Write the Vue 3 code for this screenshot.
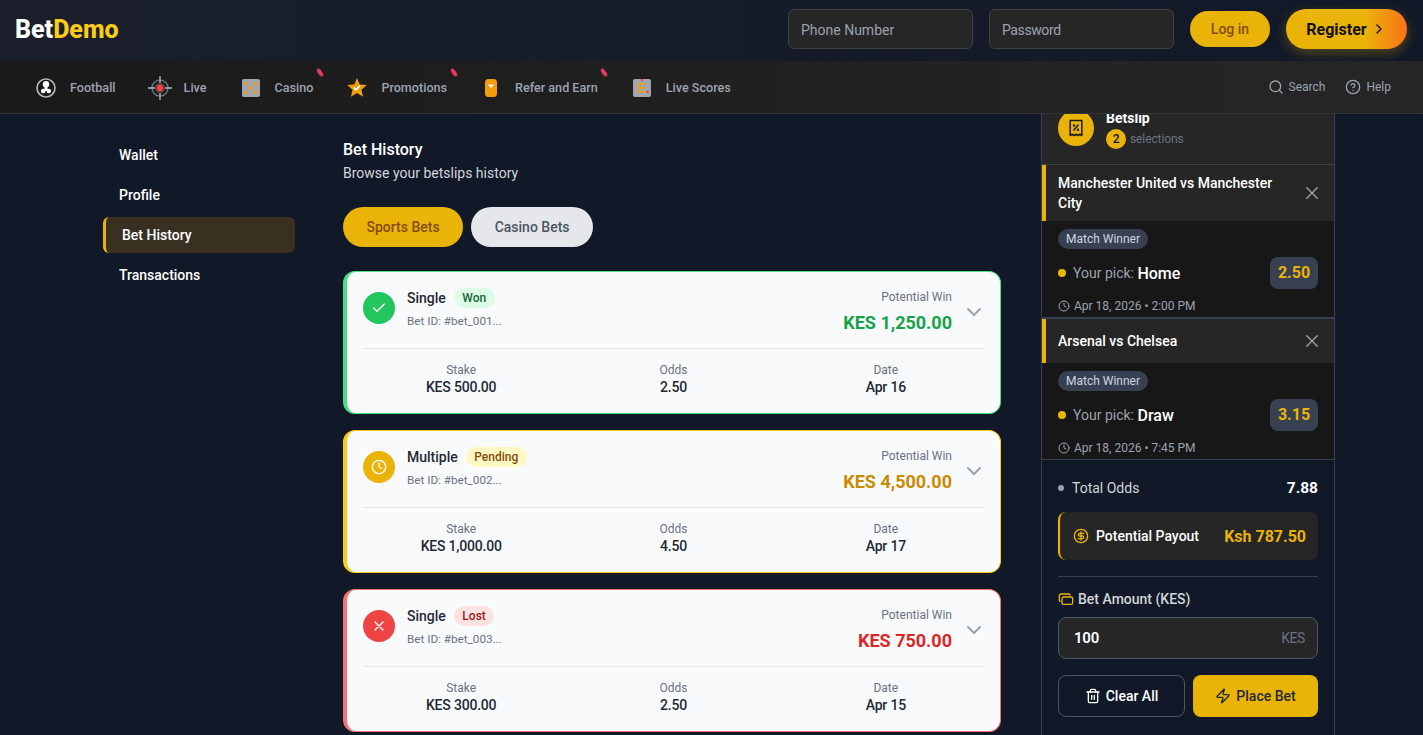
<script setup>
const navItems = [
  { label: 'Football', icon: 'football' },
  { label: 'Live', icon: 'live' },
  { label: 'Casino', icon: 'casino', flag: true },
  { label: 'Promotions', icon: 'promo', flag: true },
  { label: 'Refer and Earn', icon: 'refer', flag: true },
  { label: 'Live Scores', icon: 'scores' }
]
const sideItems = ['Wallet', 'Profile', 'Bet History', 'Transactions']
const bets = [
  { type: 'Single', status: 'Won', cls: 'won', id: '#bet_001...', win: 'KES 1,250.00', stake: 'KES 500.00', odds: '2.50', date: 'Apr 16' },
  { type: 'Multiple', status: 'Pending', cls: 'pending', id: '#bet_002...', win: 'KES 4,500.00', stake: 'KES 1,000.00', odds: '4.50', date: 'Apr 17' },
  { type: 'Single', status: 'Lost', cls: 'lost', id: '#bet_003...', win: 'KES 750.00', stake: 'KES 300.00', odds: '2.50', date: 'Apr 15' }
]
const slips = [
  { title: 'Manchester United vs Manchester City', pick: 'Home', odds: '2.50', date: 'Apr 18, 2026 • 2:00 PM' },
  { title: 'Arsenal vs Chelsea', pick: 'Draw', odds: '3.15', date: 'Apr 18, 2026 • 7:45 PM' }
]
</script>

<template>
  <div class="page">
    <header class="top">
      <div class="logo">Bet<span>Demo</span></div>
      <div class="auth">
        <div class="field">Phone Number</div>
        <div class="field">Password</div>
        <button class="login">Log in</button>
        <button class="register">Register
          <svg width="16" height="16" viewBox="0 0 24 24" fill="none" stroke="currentColor" stroke-width="2" stroke-linecap="round" stroke-linejoin="round"><path d="m9 18 6-6-6-6"/></svg>
        </button>
      </div>
    </header>

    <nav class="nav">
      <div class="nav-list">
        <div v-for="item in navItems" :key="item.label" class="nav-item">
          <span class="nav-icon">
            <svg v-if="item.icon === 'football'" width="20" height="20" viewBox="0 0 20 20">
              <circle cx="10" cy="10" r="9" fill="none" stroke="#b4b8c0" stroke-width="1.6"/>
              <circle cx="10" cy="6.200" r="3.200" fill="#fff"/>
              <circle cx="7.200" cy="13" r="2.300" fill="#fff"/>
              <circle cx="12.800" cy="13" r="2.300" fill="#fff"/>
              <path d="M8.500 8.500h3v4.500h-3z" fill="#fff"/>
            </svg>
            <svg v-else-if="item.icon === 'live'" width="24" height="24" viewBox="0 0 24 24">
              <circle cx="12" cy="12" r="8" fill="none" stroke="#6b7280" stroke-width="1.500"/>
              <circle cx="12" cy="12" r="5.500" fill="#3a3a3a"/>
              <circle cx="12" cy="12" r="3.500" fill="#ef4444"/>
              <path d="M12 0v7M12 17v7M0 12h7M17 12h7" stroke="#b4b8c0" stroke-width="1.300"/>
            </svg>
            <svg v-else-if="item.icon === 'casino'" width="18" height="18" viewBox="0 0 18 18">
              <rect width="18" height="18" rx="2" fill="#a1a5ad"/>
              <g fill="#f59e0b"><rect x="3" y="3" width="3" height="3"/><rect x="12" y="3" width="3" height="3"/><rect x="3" y="12" width="3" height="3"/><rect x="12" y="12" width="3" height="3"/><rect x="7.500" y="7.500" width="3" height="3"/></g>
            </svg>
            <svg v-else-if="item.icon === 'promo'" width="20" height="20" viewBox="0 0 20 20">
              <path d="M10 0l2.700 6.600 7.100.5-5.400 4.600 1.700 7L10 15l-6.100 3.700 1.700-7L.2 7.100l7.100-.5z" fill="#f59e0b"/>
              <path d="M6.800 9.500l2.300 2.300 4-4.300" fill="none" stroke="#fff" stroke-width="1.500"/>
            </svg>
            <svg v-else-if="item.icon === 'refer'" width="12" height="18" viewBox="0 0 12 18">
              <rect width="12" height="18" rx="3.500" fill="#f59e0b"/>
              <path d="M3.500 5.500h5v1.500h-5z M5 7h2v1.500H5z" fill="#fff"/>
            </svg>
            <svg v-else width="18" height="18" viewBox="0 0 18 18">
              <rect width="18" height="18" rx="2" fill="#a1a5ad"/>
              <rect x="8" y="0" width="2" height="2" fill="#ef4444"/>
              <g fill="#f59e0b"><rect x="4" y="4" width="8" height="1.700"/><rect x="4" y="8" width="8" height="1.700"/><rect x="4" y="12" width="8" height="1.700"/></g>
              <circle cx="14.500" cy="12.800" r="1.300" fill="#ef4444"/>
            </svg>
          </span>
          <span>{{ item.label }}</span>
          <i v-if="item.flag" class="flag"></i>
        </div>
      </div>
      <div class="nav-tools">
        <span class="tool">
          <svg width="16" height="16" viewBox="0 0 24 24" fill="none" stroke="currentColor" stroke-width="2" stroke-linecap="round"><circle cx="11" cy="11" r="8"/><path d="m21 21-4.300-4.300"/></svg>
          Search
        </span>
        <span class="tool">
          <svg width="16" height="16" viewBox="0 0 24 24" fill="none" stroke="currentColor" stroke-width="2" stroke-linecap="round" stroke-linejoin="round"><circle cx="12" cy="12" r="10"/><path d="M9.100 9a3 3 0 0 1 5.800 1c0 2-3 3-3 3"/><path d="M12 17h.01"/></svg>
          Help
        </span>
      </div>
    </nav>

    <main class="main">
      <aside class="side">
        <div v-for="s in sideItems" :key="s" class="side-item" :class="{ active: s === 'Bet History' }">{{ s }}</div>
      </aside>

      <section class="content">
        <h1>Bet History</h1>
        <p class="sub">Browse your betslips history</p>
        <div class="tabs">
          <button class="tab on">Sports Bets</button>
          <button class="tab">Casino Bets</button>
        </div>
        <div class="cards">
          <article v-for="b in bets" :key="b.id" class="card" :class="b.cls">
            <div class="card-top">
              <span class="status-icon">
                <svg v-if="b.cls === 'won'" width="16" height="16" viewBox="0 0 24 24" fill="none" stroke="#fff" stroke-width="2" stroke-linecap="round" stroke-linejoin="round"><path d="M20 6 9 17l-5-5"/></svg>
                <svg v-else-if="b.cls === 'pending'" width="16" height="16" viewBox="0 0 24 24" fill="none" stroke="#fff" stroke-width="2" stroke-linecap="round" stroke-linejoin="round"><circle cx="12" cy="12" r="10"/><path d="M12 6v6l4 2"/></svg>
                <svg v-else width="16" height="16" viewBox="0 0 24 24" fill="none" stroke="#fff" stroke-width="2" stroke-linecap="round" stroke-linejoin="round"><path d="M18 6 6 18M6 6l12 12"/></svg>
              </span>
              <div class="card-id">
                <div class="type-row"><strong>{{ b.type }}</strong><span class="badge">{{ b.status }}</span></div>
                <div class="bet-id">Bet ID: {{ b.id }}</div>
              </div>
              <div class="win">
                <div class="win-label">Potential Win</div>
                <div class="win-val">{{ b.win }}</div>
              </div>
              <svg class="chev" width="24" height="24" viewBox="0 0 24 24" fill="none" stroke="#9ca3af" stroke-width="2" stroke-linecap="round" stroke-linejoin="round"><path d="m6 9 6 6 6-6"/></svg>
            </div>
            <div class="stats">
              <div><span>Stake</span><b>{{ b.stake }}</b></div>
              <div><span>Odds</span><b>{{ b.odds }}</b></div>
              <div><span>Date</span><b>{{ b.date }}</b></div>
            </div>
          </article>
        </div>
      </section>

      <aside class="slip">
        <div class="slip-head">
          <span class="slip-icon">
            <svg width="20" height="20" viewBox="0 0 24 24" fill="none" stroke="#1a1a1a" stroke-width="1.800" stroke-linecap="round" stroke-linejoin="round"><path d="M5 3h14v18l-2.300-1.500L14.300 21 12 19.500 9.700 21l-2.400-1.500L5 21z"/><path d="m14.500 8.500-5 6"/><circle cx="9.700" cy="9" r=".6"/><circle cx="14.300" cy="14" r=".6"/></svg>
          </span>
          <div>
            <div class="slip-title">Betslip</div>
            <div class="slip-count"><span>2</span>selections</div>
          </div>
        </div>

        <div v-for="m in slips" :key="m.title" class="match">
          <div class="match-head">
            <span>{{ m.title }}</span>
            <svg width="18" height="18" viewBox="0 0 24 24" fill="none" stroke="#9ca3af" stroke-width="1.800" stroke-linecap="round"><path d="M19 5 5 19M5 5l14 14"/></svg>
          </div>
          <div class="match-body">
            <span class="chip">Match Winner</span>
            <div class="pick-row">
              <div class="pick"><i></i>Your pick: <b>{{ m.pick }}</b></div>
              <span class="odds">{{ m.odds }}</span>
            </div>
            <div class="when">
              <svg width="12" height="12" viewBox="0 0 24 24" fill="none" stroke="currentColor" stroke-width="2" stroke-linecap="round" stroke-linejoin="round"><circle cx="12" cy="12" r="10"/><path d="M12 6v6l4 2"/></svg>
              {{ m.date }}
            </div>
          </div>
        </div>

        <div class="foot">
          <div class="total"><span><i></i>Total Odds</span><b>7.88</b></div>
          <div class="payout">
            <span class="payout-l">
              <svg width="16" height="16" viewBox="0 0 24 24" fill="none" stroke="#eab308" stroke-width="2" stroke-linecap="round" stroke-linejoin="round"><circle cx="12" cy="12" r="10"/><path d="M16 8h-6a2 2 0 1 0 0 4h4a2 2 0 1 1 0 4H8"/><path d="M12 18V6"/></svg>
              Potential Payout
            </span>
            <b>Ksh 787.50</b>
          </div>
          <div class="rule"></div>
          <div class="amount-label">
            <svg width="16" height="16" viewBox="0 0 24 24" fill="none" stroke="#eab308" stroke-width="2" stroke-linecap="round" stroke-linejoin="round"><rect x="6" y="9" width="16" height="11" rx="2.500"/><path d="M3 15.500A2 2 0 0 1 2 14V7a2.500 2.500 0 0 1 2.500-2.500H16A2 2 0 0 1 18 6"/></svg>
            Bet Amount (KES)
          </div>
          <div class="amount"><b>100</b><span>KES</span></div>
          <div class="actions">
            <button class="clear">
              <svg width="16" height="16" viewBox="0 0 24 24" fill="none" stroke="currentColor" stroke-width="2" stroke-linecap="round" stroke-linejoin="round"><path d="M3 6h18"/><path d="M19 6v14a2 2 0 0 1-2 2H7a2 2 0 0 1-2-2V6"/><path d="M8 6V4a2 2 0 0 1 2-2h4a2 2 0 0 1 2 2v2"/><path d="M10 11v6M14 11v6"/></svg>
              Clear All
            </button>
            <button class="place">
              <svg width="16" height="16" viewBox="0 0 24 24" fill="none" stroke="currentColor" stroke-width="2" stroke-linecap="round" stroke-linejoin="round"><path d="M4 14a1 1 0 0 1-.8-1.600l9.900-10.200a.5.5 0 0 1 .9.500l-1.900 6A1 1 0 0 0 13 10h7a1 1 0 0 1 .8 1.600l-9.900 10.200a.5.500 0 0 1-.9-.5l1.900-6A1 1 0 0 0 11 14z"/></svg>
              Place Bet
            </button>
          </div>
        </div>
      </aside>
    </main>
  </div>
</template>

<style>
html, body { margin: 0; background: #111827; overflow: hidden; }
</style>

<style scoped>
.page { width: 1423px; height: 735px; overflow: hidden; background: #111827; font-family: Roboto, Inter, sans-serif; color: #fff; }
button { font-family: inherit; border: 0; cursor: pointer; }

.top { height: 61px; box-sizing: border-box; padding: 0 16px 3px 15px; display: flex; align-items: center; justify-content: space-between; background: linear-gradient(90deg, #1a1f2b, #111827); }
.logo { font-size: 25px; font-weight: 800; color: #fff; }
.logo span { color: #facc15; }
.auth { display: flex; align-items: center; gap: 16px; }
.field { width: 185px; height: 40px; box-sizing: border-box; border: 1px solid #404040; border-radius: 6px; background: #262626; color: #9ca3af; font-size: 14px; line-height: 40px; padding-left: 12px; }
.field + .field { letter-spacing: -.4px; }
.login { width: 80px; height: 36px; border-radius: 18px; background: #eab308; color: #854d0e; font-size: 14px; font-weight: 500; }
.register { width: 121px; height: 40px; border-radius: 20px; background: linear-gradient(90deg, #eab308 65%, #f97316); color: #111; font-size: 16px; font-weight: 700; display: flex; align-items: center; justify-content: center; gap: 4px; box-shadow: 0 4px 12px rgba(234, 179, 8, .3); }

.nav { position: relative; z-index: 2; height: 53px; box-sizing: border-box; border-bottom: 1px solid #333; padding: 0 32px 0 18px; display: flex; align-items: center; justify-content: space-between; background: linear-gradient(90deg, #1a1a1a, #262626); }
.nav-list { display: flex; }
.nav-item { position: relative; height: 52px; padding: 1px 16px 0; box-sizing: border-box; display: flex; align-items: center; gap: 12px; color: #9ca3af; font-size: 12.600px; font-weight: 500; }
.nav-icon { width: 24px; height: 24px; display: flex; align-items: center; justify-content: center; }
.flag { position: absolute; top: 7px; right: 7.500px; width: 4px; height: 9px; border-radius: 50%; background: #ee3a62; filter: blur(.4px); transform: rotate(-35deg); }
.nav-tools { display: flex; gap: 20px; }
.tool { display: flex; align-items: center; gap: 5px; color: #9ca3af; font-size: 12px; }

.main { height: 622px; overflow: hidden; display: flex; align-items: flex-start; padding-left: 103px; }
.side { width: 192px; margin-top: 23px; margin-right: 48px; flex: none; display: flex; flex-direction: column; gap: 4px; }
.side-item { height: 36px; box-sizing: border-box; padding-left: 16px; line-height: 36px; font-size: 14px; font-weight: 500; color: #fff; border-radius: 6px; }
.side-item.active { border-left: 3px solid #eab308; background: #3a3021; }

.content { width: 658px; flex: none; margin-right: 40px; padding-top: 26px; }
h1 { margin: 0; font-size: 16px; line-height: 20px; font-weight: 500; }
.sub { margin: 3px 0 0; font-size: 14px; line-height: 20px; color: #d1d5db; }
.tabs { margin-top: 24px; display: flex; gap: 8px; }
.tab { height: 40px; padding: 0 23.500px; border-radius: 20px; background: #e5e7eb; color: #4b5563; font-size: 14px; font-weight: 500; }
.tab.on { background: #eab308; color: #854d0e; }

.cards { margin-top: 24px; display: flex; flex-direction: column; gap: 16px; }
.card { height: 143px; box-sizing: border-box; background: #f9fafb; border: 1px solid; border-left-width: 4px; border-radius: 12px; padding: 20px 16px 0; color: #111827; }
.card.won { border-color: #4ade80; }
.card.pending { border-color: #facc15; }
.card.lost { border-color: #f87171; }
.card-top { height: 56px; border-bottom: 1px solid #e5e7eb; display: flex; align-items: flex-start; }
.status-icon { width: 32px; height: 32px; border-radius: 50%; display: flex; align-items: center; justify-content: center; flex: none; }
.won .status-icon { background: #22c55e; }
.pending .status-icon { background: #eab308; }
.lost .status-icon { background: #ef4444; }
.card-id { margin-left: 12px; flex: 1; margin-top: -4px; }
.type-row { display: flex; align-items: center; gap: 8px; }
.type-row strong { font-size: 14px; font-weight: 500; color: #1f2937; }
.badge { height: 20px; line-height: 20px; padding: 0 8.500px; border-radius: 10px; font-size: 12px; font-weight: 500; }
.won .badge { background: #dcfce7; color: #166534; }
.pending .badge { background: #fef9c3; color: #854d0e; }
.lost .badge { background: #fee2e2; color: #991b1b; }
.bet-id { margin-top: 5px; font-size: 11.700px; line-height: 16px; color: #6b7280; }
.win { text-align: right; margin-top: -3px; }
.win-label { font-size: 12px; line-height: 16px; color: #6b7280; }
.win-val { margin-top: 6px; font-size: 18px; line-height: 24px; font-weight: 700; }
.won .win-val { color: #16a34a; }
.pending .win-val { color: #ca8a04; }
.lost .win-val { color: #dc2626; }
.chev { margin: 8px -2px 0 10px; flex: none; }
.stats { display: grid; grid-template-columns: repeat(3, 1fr); gap: 16px; padding-top: 13px; text-align: center; }
.stats span { display: block; font-size: 12px; line-height: 16px; color: #6b7280; }
.stats b { display: block; font-size: 14px; line-height: 18px; font-weight: 500; letter-spacing: -.2px; color: #1f2937; }

.slip { width: 294px; flex: none; margin-top: -21px; box-sizing: border-box; border: solid #374151; border-width: 0 1px; }
.slip-head { height: 72px; box-sizing: border-box; padding: 17px 16px 0; display: flex; gap: 12px; background: #262626; border-bottom: 1px solid #404040; }
.slip-icon { width: 36px; height: 36px; border-radius: 50%; background: #eab308; display: flex; align-items: center; justify-content: center; flex: none; }
.slip-title { font-size: 14px; font-weight: 700; line-height: 16px; }
.slip-count { margin-top: 3px; display: flex; align-items: center; gap: 4px; font-size: 12px; letter-spacing: -.1px; color: #6b7280; }
.slip-count span { width: 20px; height: 20px; border-radius: 50%; background: #eab308; color: #111; text-align: center; line-height: 20px; font-size: 12px; font-weight: 500; }

.match { border-bottom: 2px solid #374151; }
.match:nth-of-type(3) { border-bottom-width: 1px; }
.match-head { box-sizing: border-box; min-height: 44px; padding: 8px 13px 8px 12px; border-left: 4px solid #eab308; background: #262626; display: flex; align-items: center; justify-content: space-between; gap: 12px; font-size: 14px; line-height: 20px; font-weight: 500; }
.match-head svg { flex: none; }
.match-body { height: 96px; box-sizing: border-box; padding: 8px 16px 0; background: #171717; }
.chip { display: block; width: fit-content; height: 20px; line-height: 20px; padding: 0 8px; border-radius: 10px; background: #374151; color: #cbd5e1; font-size: 12px; }
.pick-row { margin-top: 8px; display: flex; align-items: center; justify-content: space-between; }
.pick { display: flex; align-items: center; font-size: 14px; color: #9ca3af; white-space: pre; }
.pick i { width: 8px; height: 8px; border-radius: 50%; background: #eab308; margin-right: 7px; }
.pick b { font-size: 16px; font-weight: 500; color: #fff; }
.odds { width: 48px; height: 32px; border-radius: 8px; background: #374151; color: #eab308; font-size: 16px; font-weight: 700; text-align: center; line-height: 32px; }
.when { margin-top: 9px; display: flex; align-items: center; gap: 4px; font-size: 12px; line-height: 16px; color: #9ca3af; }

.foot { padding: 18px 16px 40px; background: #111827; }
.total { display: flex; justify-content: space-between; align-items: center; font-size: 14px; color: #d1d5db; height: 20px; }
.total span { display: flex; align-items: center; }
.total i { width: 6px; height: 6px; border-radius: 50%; background: #9ca3af; margin-right: 8px; }
.total b { font-size: 15.500px; font-weight: 700; color: #fff; }
.payout { margin-top: 14px; height: 48px; box-sizing: border-box; border-left: 2px solid #eab308; border-radius: 8px; background: #262626; padding: 0 12px 0 13px; display: flex; align-items: center; justify-content: space-between; }
.payout-l { display: flex; align-items: center; gap: 7px; font-size: 14px; font-weight: 500; }
.payout b { font-size: 16px; font-weight: 700; color: #eab308; }
.rule { margin-top: 16px; height: 1px; background: #374151; }
.amount-label { margin-top: 14px; height: 16px; display: flex; align-items: center; gap: 4px; font-size: 14px; font-weight: 500; color: #d1d5db; }
.amount { margin-top: 10px; height: 42px; box-sizing: border-box; border: 1px solid #4b5563; border-radius: 8px; background: #262626; padding: 0 12px 0 15px; display: flex; align-items: center; justify-content: space-between; }
.amount b { font-size: 15px; font-weight: 600; letter-spacing: -.2px; color: #fff; }
.amount span { font-size: 14px; letter-spacing: -.4px; color: #6b7280; }
.actions { margin-top: 16px; display: grid; grid-template-columns: 127px 1fr; gap: 8px; }
.actions button { height: 42px; border-radius: 8px; display: flex; align-items: center; justify-content: center; gap: 5px; font-size: 14px; }
.clear { background: transparent; border: 1px solid #4b5563; color: #fff; font-weight: 500; }
.place { background: #eab308; color: #1f2937; font-weight: 500; }
</style>
